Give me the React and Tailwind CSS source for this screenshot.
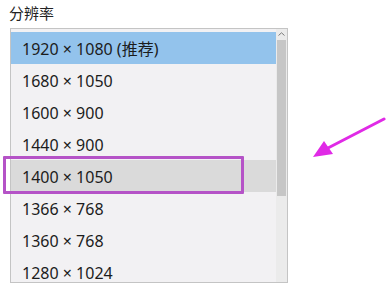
import React from "react";

const items = [
  "1920 × 1080 (推荐)",
  "1680 × 1050",
  "1600 × 900",
  "1440 × 900",
  "1400 × 1050",
  "1366 × 768",
  "1360 × 768",
  "1280 × 1024",
];

export default function App() {
  return (
    <div
      className="relative w-[386px] h-[288px] bg-white overflow-hidden text-[#1c1c1c]"
      style={{ fontFamily: '"Noto Sans", "Noto Sans CJK SC", sans-serif' }}
    >
      <div className="pl-[9px] pt-[3px] h-[25px] text-[15px] leading-[20px] text-[#222]">分辨率</div>
      <div className="ml-[10px] mt-[3px] w-[278px] h-[255px] border border-[#c4c4c4] bg-[#f2f1f3] flex overflow-hidden">
        <div className="flex-1 pt-[3px] flex flex-col">
          {items.map((t, i) => (
            <div
              key={t}
              className={
                "h-[32px] shrink-0 flex items-center pl-[11px] pt-[1px] text-[16px] " +
                (i === 0 ? "bg-[#93c3ec]" : i === 4 ? "bg-[#dadada]" : "")
              }
            >
              {t}
            </div>
          ))}
        </div>
        <div className="w-[11px] flex flex-col bg-[#ebebeb]">
          <div className="h-[10px] flex items-center justify-center">
            <svg width="7" height="4" viewBox="0 0 7 4">
              <path d="M0.5 3.5 L3.5 0.8 L6.5 3.5" stroke="#7a7a7a" strokeWidth="1" fill="none" />
            </svg>
          </div>
          <div className="mx-[1px] mt-[1px] h-[156px] bg-[#c6c6c6]" />
        </div>
      </div>
      <div className="absolute left-[3px] top-[156px] w-[241px] h-[38px] border-[3px] border-[#b553c7] rounded-[1px]" />
      <svg className="absolute left-[300px] top-[110px]" width="86" height="56" viewBox="0 0 86 56">
        <path d="M84 9 L28 38" stroke="#e02ae6" strokeWidth="3" strokeLinecap="round" />
        <path d="M13 47 L24 31 L33 44 Z" fill="#e02ae6" />
      </svg>
    </div>
  );
}
